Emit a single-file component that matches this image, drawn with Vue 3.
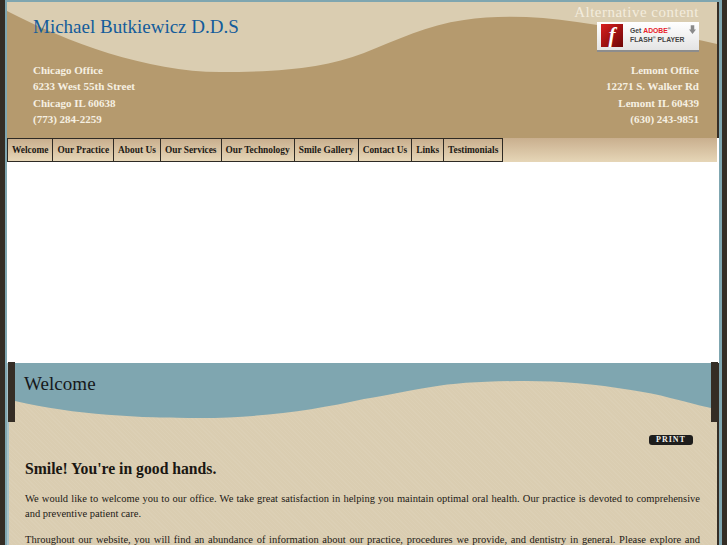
<script setup>
const tabs = ['Welcome', 'Our Practice', 'About Us', 'Our Services', 'Our Technology', 'Smile Gallery', 'Contact Us', 'Links', 'Testimonials']
</script>

<template>
  <div class="site">
    <div class="frame">
      <header class="head">
        <svg class="curve" viewBox="0 0 710 136" preserveAspectRatio="none" aria-hidden="true">
          <path d="M0 9 C60 40 140 70 213 70 C280 70 320 65 357 51 C390 38 420 23 457 18 C490 13 530 14 570 20 C620 28 670 32 710 42 L710 136 L0 136 Z" fill="#b59a6e" />
        </svg>
        <div class="head-top">
          <h1 class="title">Michael Butkiewicz D.D.S</h1>
          <div class="flash">
            <div class="alt">Alternative content</div>
            <div class="badge">
              <span class="f-box">f</span>
              <span class="badge-text">
                <span>Get <b>ADOBE</b><sup>®</sup></span>
                <span>FLASH<sup>®</sup> PLAYER</span>
              </span>
              <svg class="dl" viewBox="0 0 8 10" aria-hidden="true"><path d="M2 0h4v5h2L4 10 0 5h2z" fill="#8a8a8a" /></svg>
            </div>
          </div>
        </div>
        <div class="offices">
          <address>Chicago Office<br />6233 West 55th Street<br />Chicago IL 60638<br />(773) 284-2259</address>
          <address class="right">Lemont Office<br />12271 S. Walker Rd<br />Lemont IL 60439<br />(630) 243-9851</address>
        </div>
      </header>
      <nav class="nav">
        <a v-for="t in tabs" :key="t" class="tab">{{ t }}</a>
      </nav>
      <div class="blank"></div>
      <section class="main">
        <span class="bracket l"></span>
        <span class="bracket r"></span>
        <svg class="wave" viewBox="0 0 696 60" preserveAspectRatio="none" aria-hidden="true">
          <path d="M0 0 H696 V45 C665 38 645 31 616 27 C580 21 545 18 512 18 C470 18 440 20 416 24 C390 28 375 32 349 36 C300 47 245 55 185 55 C125 55 60 52 0 38 Z" fill="#7fa6b0" />
        </svg>
        <h2 class="welcome">Welcome</h2>
        <div class="print-row"><span class="print">PRINT</span></div>
        <h3 class="smile">Smile! You're in good hands.</h3>
        <p>We would like to welcome you to our office. We take great satisfaction in helping you maintain optimal oral health. Our practice is devoted to comprehensive and preventive patient care.</p>
        <p><span class="full-line">Throughout our website, you will find an abundance of information about our practice, procedures we provide, and dentistry in general. Please explore and</span></p>
      </section>
    </div>
  </div>
</template>

<style>
html, body { margin: 0; overflow: hidden; }
</style>

<style scoped>
.site {
  width: 727px;
  height: 545px;
  overflow: hidden;
  box-sizing: border-box;
  padding: 0 5px;
  background: #342d25;
  font-family: "Liberation Serif", serif;
}
.frame {
  box-sizing: border-box;
  height: 545px;
  overflow: hidden;
  background: #fff;
  border-top: 2px solid #7fa6b0;
  border-left: 2px solid #7fa6b0;
  border-right: 3px solid #7fa6b0;
}
.head {
  position: relative;
  box-sizing: border-box;
  height: 136px;
  background: #dacdb1;
  border-right: 2px solid #342d25;
}
.curve {
  position: absolute;
  inset: 0;
  width: 100%;
  height: 100%;
}
.head-top {
  position: relative;
  display: flex;
  justify-content: space-between;
  padding: 0 18px 0 26px;
  height: 60px;
}
.title {
  margin: 13px 0 0;
  font-size: 19px;
  font-weight: normal;
  line-height: 24px;
  color: #135c9b;
}
.flash {
  display: flex;
  flex-direction: column;
  align-items: flex-end;
}
.alt {
  font-size: 15px;
  line-height: 20px;
  letter-spacing: 0.5px;
  color: #f3ecdd;
}
.badge {
  position: relative;
  box-sizing: border-box;
  width: 102px;
  height: 30px;
  display: flex;
  align-items: center;
  gap: 7px;
  padding: 0 0 1px 4px;
  background: linear-gradient(#fff, #e4e4e4);
  border-bottom: 2px solid #8d8d8d;
  font-family: "Liberation Sans", sans-serif;
}
.f-box {
  width: 22px;
  height: 23px;
  flex: none;
  background: linear-gradient(135deg, #d81f1f, #6e0606);
  color: #fff;
  font: italic bold 21px/23px "Liberation Serif", serif;
  text-align: center;
}
.badge-text {
  display: flex;
  flex-direction: column;
  font-size: 6.8px;
  line-height: 8.5px;
  font-weight: bold;
  color: #444;
}
.badge-text b { color: #e8222a; }
.badge-text sup { font-size: 4px; line-height: 0; }
.dl {
  position: absolute;
  top: 3px;
  right: 3px;
  width: 7px;
  height: 9px;
}
.offices {
  position: relative;
  display: flex;
  justify-content: space-between;
  padding: 0 18px 0 26px;
}
address {
  font-style: normal;
  font-weight: bold;
  font-size: 11px;
  line-height: 16.4px;
  color: #f6f0e2;
}
.right { text-align: right; }
.nav {
  box-sizing: border-box;
  display: flex;
  height: 24px;
  width: 710px;
  background: linear-gradient(#c9af8e, #e6d6b7);
}
.tab {
  box-sizing: border-box;
  padding: 0 4px;
  font-size: 9.4px;
  font-weight: bold;
  line-height: 22px;
  color: #1d1a15;
  white-space: nowrap;
  border: 1px solid #2e2a24;
  border-right: none;
  background: linear-gradient(#c9af8e, #e6d6b7);
}
.tab:last-child { border-right: 1px solid #2e2a24; }
.blank { height: 201px; }
.main {
  position: relative;
  box-sizing: border-box;
  height: 183px;
  padding: 0 17px 0 16px;
  background: #dacdb1 repeating-linear-gradient(45deg, rgba(255, 255, 255, 0.05) 0 1px, transparent 1px 3px);
  border-left: 2px solid #a9c2c8;
  border-right: 2px solid #342d25;
}
.bracket {
  position: absolute;
  top: -1px;
  width: 7px;
  height: 60px;
  background: #342d25;
}
.bracket.l { left: -1px; }
.bracket.r { right: -1px; }
.wave {
  position: absolute;
  top: 0;
  left: 6px;
  width: 696px;
  height: 60px;
}
.welcome {
  position: relative;
  margin: 0 0 0 -1px;
  padding: 9px 0 0;
  font-size: 19px;
  letter-spacing: 0.05px;
  line-height: 24px;
  font-weight: normal;
  color: #16181a;
}
.print-row {
  display: flex;
  justify-content: flex-end;
  margin: 39px 7px 0 0;
}
.print {
  width: 44px;
  height: 10px;
  border-radius: 3px;
  background: #1e1d1c;
  color: #f2f0ea;
  font-size: 8px;
  font-weight: bold;
  line-height: 10px;
  letter-spacing: 1px;
  text-align: center;
}
.smile {
  margin: 14px 0 12px;
  font-size: 15.7px;
  line-height: 20px;
  font-weight: bold;
  color: #1a1712;
}
p {
  margin: 0 0 11px;
  font-size: 10.5px;
  line-height: 15px;
  color: #1d1a15;
  text-align: justify;
}
.full-line {
  display: block;
  text-align-last: justify;
}
</style>
